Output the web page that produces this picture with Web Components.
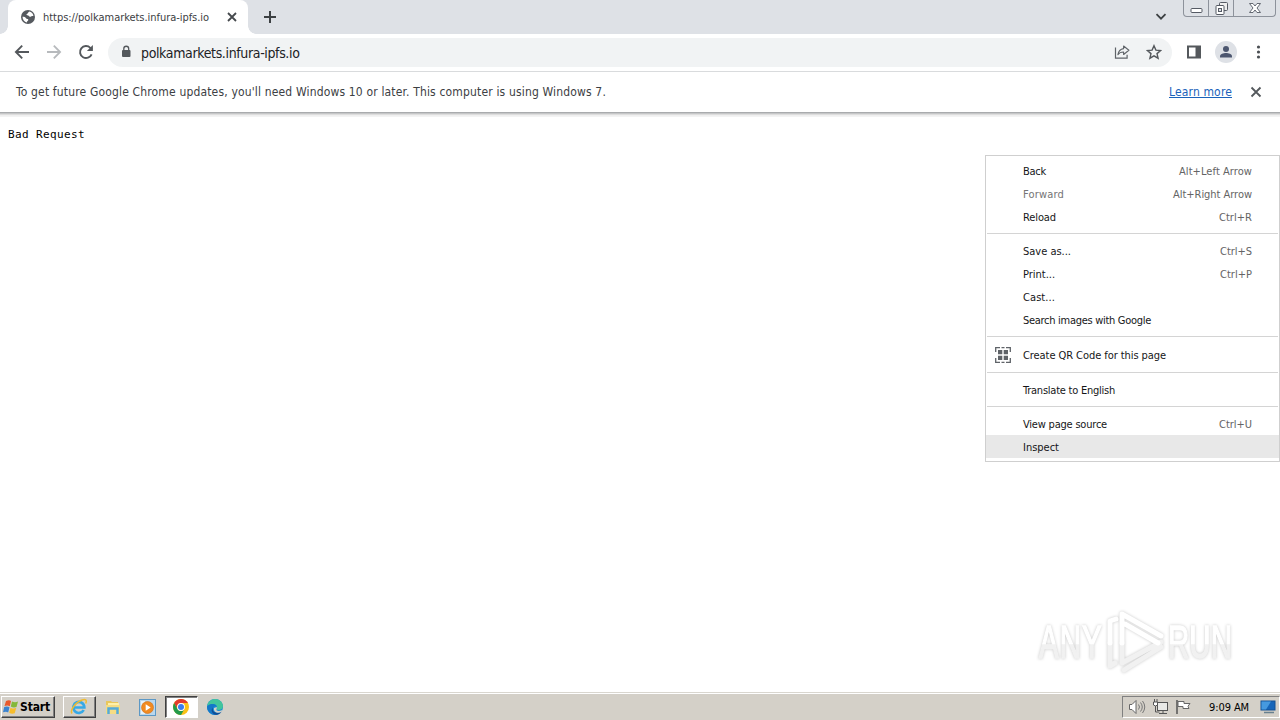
<!DOCTYPE html>
<html lang="en">
<head>
<meta charset="utf-8">
<title>polkamarkets.infura-ipfs.io</title>
<style>
    html, body {
        margin: 0;
        width: 1280px;
        height: 720px;
        overflow: hidden;
        background: #fff;
        font-family: "DejaVu Sans Condensed", "DejaVu Sans", Tahoma, sans-serif;
    }
</style>
</head>
<body>
<desktop-screen></desktop-screen>

<script>
/**
 * Base class: clones the static markup into an open shadow root
 */
class BaseElement extends HTMLElement {
    constructor() {
        super();
        this.attachShadow({ mode: 'open' });
    }

    connectedCallback() {
        this.shadowRoot.innerHTML = `<style>
            * { box-sizing: border-box; }
            svg { display: block; flex: none; }
            ${this.styles()}
        </style>${this.markup()}`;
    }

    styles() { return ''; }
    markup() { return '<slot></slot>'; }
}

/**
 * A single line of text, tracked so that it fills the given width
 */
class FitText extends HTMLElement {
    constructor() {
        super();
        this.attachShadow({ mode: 'open' });
    }

    connectedCallback() {
        this.shadowRoot.innerHTML = `
            <style>
                :host { display: flex; flex: none; white-space: nowrap; }
                span { display: block; text-decoration: inherit; }
            </style>
            <span></span>
        `;
        const span = this.shadowRoot.querySelector('span');
        span.textContent = this.getAttribute('text');
        const width = parseFloat(this.getAttribute('width'));
        if (!width) return;
        const natural = span.getBoundingClientRect().width;
        span.style.letterSpacing = (width - natural) / span.textContent.length + 'px';
        this.style.width = width + 'px';
    }
}

class TabStrip extends BaseElement {
    styles() {
        return `
            :host { display: flex; height: 34px; background: #dee1e6; padding-left: 8px; color: #3c4043; }
            .tab {
                position: relative; display: flex; align-items: center;
                width: 240px; height: 34px; padding: 0 9px 0 13px;
                background: #fff; border-radius: 8px 8px 0 0; font-size: 11px;
            }
            .tab::before, .tab::after {
                content: ""; position: absolute; bottom: 0; width: 8px; height: 8px;
            }
            .tab::before { left: -8px; background: radial-gradient(circle at 0 0, transparent 7.5px, #fff 8px); }
            .tab::after { right: -8px; background: radial-gradient(circle at 100% 0, transparent 7.5px, #fff 8px); }
            fit-text { margin: 0 auto 0 8px; }
            .plus { margin: 11px 0 0 16px; }
            .search { margin: 13px 16px 0 auto; }
            .controls {
                display: flex; height: 17px; width: 93px; margin-right: 4px;
                border: 1px solid #8d929b; border-top: 0; border-radius: 0 0 4px 4px;
            }
            .controls span { display: flex; justify-content: center; align-items: center; border-right: 1px solid #8d929b; }
            .controls span:nth-child(1) { width: 25px; }
            .controls span:nth-child(2) { width: 25px; }
            .controls span:nth-child(3) { flex: 1; border: 0; }
        `;
    }

    markup() {
        return `
            <div class="tab">
                <svg width="14" height="14" viewBox="0 0 14 14">
                    <circle cx="7" cy="7" r="7" fill="#565a5f"/>
                    <path d="M8.600 1.600C7 2 7.200 3.600 5.900 4.100c-.8.3-.4 1.200.4 1.200 1.800.1 1.500 1.400 2.700 1.500 1.200 0 1.400-1.100 3.400-.7-.1-2-1.500-3.900-3.800-4.500zM1.500 6.800c1.800 0 2.900.4 3.500 1.500.5.8 2.200.4 2.300 1.400.1 1.200-1.500 1-1.400 2.700-2.600-.5-4.300-2.900-4.400-5.600z" fill="#fff"/>
                </svg>
                <fit-text text="https://polkamarkets.infura-ipfs.io" width="166"></fit-text>
                <svg width="14" height="14" viewBox="0 0 14 14"><path d="M3 3l8 8M11 3l-8 8" stroke="#45494d" stroke-width="1.800"/></svg>
            </div>
            <svg class="plus" width="12" height="12" viewBox="0 0 12 12"><path d="M6 0v12M0 6h12" stroke="#3c4043" stroke-width="2"/></svg>
            <svg class="search" width="12" height="8" viewBox="0 0 12 8"><path d="M1.500 1.200L6 5.700l4.500-4.500" fill="none" stroke="#3c4043" stroke-width="1.800"/></svg>
            <div class="controls">
                <span><svg width="13" height="17" viewBox="0 0 13 17"><rect x="1" y="8.500" width="11" height="4" rx="1" fill="#fff" stroke="#555a64"/></svg></span>
                <span><svg width="13" height="17" viewBox="0 0 13 17"><rect x="4.500" y="2.500" width="8" height="8" rx="1" fill="#eee" stroke="#555a64"/><rect x="1" y="5.500" width="8" height="9" rx="1" fill="#fff" stroke="#555a64"/><rect x="3.500" y="8.500" width="3" height="3" fill="#dee1e6" stroke="#555a64"/></svg></span>
                <span><svg width="14" height="17" viewBox="0 0 14 17"><path d="M1.500 3.500h3.500L7 6l2-2.500h3.500L9 8l3.500 4.500H9L7 10l-2 2.500H1.500L5 8z" fill="#fff" stroke="#555a64" stroke-width=".9"/></svg></span>
            </div>
        `;
    }
}

class BrowserToolbar extends BaseElement {
    styles() {
        return `
            :host { display: flex; align-items: center; height: 38px; padding: 0 14px 1px; background: #fff; border-bottom: 1px solid #d9dbdd; }
            .omnibox {
                display: flex; align-items: center; width: 1064px; height: 29px;
                margin-left: 14px; padding: 0 10px 0 12px;
                border-radius: 15px; background: #f1f3f4; color: #202124; font-size: 14px;
            }
            fit-text { margin: 2px auto 0 9px; line-height: 18px; }
            .nav + .nav { margin-left: 16px; }
            .star { margin-left: 16px; }
            .panel { margin-left: 14px; }
            .avatar { margin-left: 13px; }
            .more { margin-left: 19px; }
        `;
    }

    markup() {
        return `
            <svg class="nav" width="16" height="16" viewBox="0 0 16 16"><path d="M15 8H2M8.200 1.700L1.900 8l6.300 6.300" fill="none" stroke="#54585c" stroke-width="1.900"/></svg>
            <svg class="nav" width="16" height="16" viewBox="0 0 16 16"><path d="M1 8h13M7.800 1.700L14.100 8l-6.300 6.300" fill="none" stroke="#b7babd" stroke-width="1.800"/></svg>
            <svg class="nav" width="16" height="16" viewBox="0 0 16 16"><path d="M13.600 10.300A6 6 0 1 1 12.300 3.800L14 5.500" fill="none" stroke="#54585c" stroke-width="1.900"/><path d="M14.900 1v6H8.900z" fill="#54585c"/></svg>
            <div class="omnibox">
                <svg width="12" height="14" viewBox="0 0 12 14"><rect x="2" y="5" width="8.500" height="7" rx="1" fill="#54585c"/><path d="M3.800 6V3.700a2.450 2.450 0 0 1 4.900 0V6" fill="none" stroke="#54585c" stroke-width="1.300"/></svg>
                <fit-text text="polkamarkets.infura-ipfs.io" width="158.500"></fit-text>
                <svg width="16" height="16" viewBox="0 0 16 16"><path d="M1.500 3.500v10.600h11.600v-3.300" fill="none" stroke="#5f6368" stroke-width="1.200"/><path d="M9.600 2l5.300 4.300-5.300 4.200V8C7 8 5.100 8.800 3.900 10.700 4.400 7.500 6.300 5 9.600 4.600z" fill="none" stroke="#5f6368" stroke-width="1.100" stroke-linejoin="round"/></svg>
                <svg class="star" width="16" height="16" viewBox="0 0 16 16"><path d="M8 1.700l1.900 4.400 4.700.4L11 9.600l1.100 4.600L8 11.800l-4.100 2.400L5 9.600 1.400 6.500l4.700-.4z" fill="none" stroke="#54585c" stroke-width="1.400"/></svg>
            </div>
            <svg class="panel" width="16" height="16" viewBox="0 0 16 16"><rect x="2" y="2.500" width="12" height="11" fill="none" stroke="#54585c" stroke-width="2"/><path d="M9.500 2h5v12h-5z" fill="#54585c"/></svg>
            <svg class="avatar" width="22" height="22" viewBox="0 0 22 22"><circle cx="11" cy="11" r="11" fill="#dee1e6"/><circle cx="11" cy="8" r="3" fill="#4c566f"/><path d="M5 16.500v-1.300c0-2.100 3.500-3.200 6-3.200s6 1.100 6 3.200v1.300z" fill="#4c566f"/></svg>
            <svg class="more" width="5" height="16" viewBox="0 0 5 16"><g fill="#4b4f53"><circle cx="2.500" cy="3" r="1.600"/><circle cx="2.500" cy="8" r="1.600"/><circle cx="2.500" cy="13" r="1.600"/></g></svg>
        `;
    }
}

class InfoBar extends BaseElement {
    styles() {
        return `
            :host {
                display: flex; align-items: center; height: 40px; padding: 0 18px 0 16px;
                background: #fff; color: #3c4043; font-size: 12px; line-height: 16px;
                box-shadow: 0 1px 0 #a9abad, 0 2px 0 #c5c6c7, 0 3px 1px #ddd, 0 5px 0 #f3f3f3;
            }
            .link { margin-left: auto; margin-right: 18px; color: #1a62ba; text-decoration: underline; }
        `;
    }

    markup() {
        return `
            <fit-text text="To get future Google Chrome updates, you'll need Windows 10 or later. This computer is using Windows 7." width="590"></fit-text>
            <fit-text class="link" text="Learn more" width="63"></fit-text>
            <svg width="12" height="12" viewBox="0 0 12 12"><path d="M1.500 1.500l9 9M10.500 1.500l-9 9" stroke="#54585c" stroke-width="1.800"/></svg>
        `;
    }
}

class MenuItem extends BaseElement {
    styles() {
        return `
            :host { display: flex; align-items: center; height: 23px; padding: 0 27px 0 9px; color: #151618; }
            :host([disabled]) { color: #747474; }
            :host([active]) { background: #e8e8e8; }
            :host([tall]) { height: 25px; }
            fit-text { margin-top: 2px; }
            .icon { width: 16px; margin-right: 12px; }
            .shortcut { margin-left: auto; color: #646464; }
        `;
    }

    markup() {
        const shortcut = this.getAttribute('shortcut');
        return `
            <div class="icon"><slot></slot></div>
            <fit-text text="${this.getAttribute('label')}" width="${this.getAttribute('w')}"></fit-text>
            ${shortcut ? `<fit-text class="shortcut" text="${shortcut}" width="${this.getAttribute('sw')}"></fit-text>` : ''}
        `;
    }
}

class MenuSeparator extends BaseElement {
    styles() {
        return `
            :host { display: block; height: 11px; padding: 5px 1px; }
            div { height: 1px; background: #d4d4d4; }
        `;
    }

    markup() { return '<div></div>'; }
}

class ContextMenu extends BaseElement {
    styles() {
        return `
            :host {
                display: block; width: 295px; height: 307px; padding: 3px 0; box-sizing: border-box;
                background: #fff; border: 1px solid #cfcfcf; font-size: 11px; line-height: 15px;
            }
        `;
    }
}

/**
 * Semi-transparent ANY RUN mark in the lower right corner
 */
class RunWatermark extends BaseElement {
    styles() {
        return `
            :host { display: block; width: 210px; height: 74px; }
            svg { filter: drop-shadow(0 0 1.5px rgba(0, 0, 0, .22)); }
            text { font: 46px "Liberation Sans", sans-serif; fill: url(#fade); stroke: url(#fade); stroke-width: 1.5px; }
        `;
    }

    markup() {
        return `
            <svg width="210" height="74" viewBox="0 0 210 74">
                <defs><linearGradient id="fade" x1="0" y1="-33" x2="0" y2="0" gradientUnits="userSpaceOnUse">
                    <stop offset=".56" stop-color="#fff"/><stop offset=".6" stop-color="#f1f1f1"/>
                </linearGradient></defs>
                <g transform="translate(9 55) scale(.64 1)"><text textLength="98" y="0">ANY</text></g>
                <g transform="translate(138 55) scale(.64 1)"><text textLength="100" y="0">RUN</text></g>
                <g fill="none" stroke-width="5" stroke-linejoin="round" stroke-linecap="round">
                    <path d="M94 67l37-23M131 39l-39 21V40" stroke="#f1f1f1"/>
                    <path d="M80 40v23l5-3" stroke="#f1f1f1"/>
                    <path d="M80 40V18l6-2" stroke="#fff"/>
                    <path d="M92 40V11l39 22M95 21l33 19" stroke="#fff"/>
                </g>
            </svg>
        `;
    }
}

class TaskBar extends BaseElement {
    styles() {
        return `
            :host {
                display: flex; align-items: center; height: 28px; padding: 3px 0 2px 1px; box-sizing: border-box;
                background: #d4d0c8; border-top: 1px solid #d9d6cf; box-shadow: inset 0 1px #fff; color: #000;
            }
            .start, .app {
                display: flex; align-items: center; justify-content: center; height: 22px;
            }
            .start, .raised {
                border: 1px solid; border-color: #fff #404040 #404040 #fff;
                box-shadow: inset -1px -1px #808080;
            }
            .start { width: 54px; padding-right: 3px; font-size: 12px; font-weight: bold; }
            .app { width: 33px; margin-right: 1px; padding-right: 1px; }
            .raised { margin-left: 8px; }
            .pressed { border: 1px solid; border-color: #404040 #fff #fff #404040; background: #fff; box-shadow: inset 1px 1px #808080; }
            .tray {
                display: flex; align-items: center; width: 158px; height: 22px; margin-left: auto; padding: 0 3px 0 5px;
                border: 1px solid; border-color: #808080 #fff #fff #808080; font-size: 11px;
            }
            .tray svg + svg { margin-left: 6px; }
            .tray fit-text { margin-left: auto; }
            .tray fit-text + svg { margin-left: 11px; }
        `;
    }

    markup() {
        return `
            <div class="start">
                <svg width="17" height="16" viewBox="0 0 17 16">
                    <path d="M3 2c2-1 4-1 5 0L6.800 7.200C5.300 6.200 3.500 6.200 1.500 7z" fill="#e8592b"/>
                    <path d="M9 2.500c2 1 4 1 6 0L13.500 8c-2 .8-4 .6-5.700-.4z" fill="#84b83a"/>
                    <path d="M1.200 8c2-.8 4-.7 5.300.3L5.200 13.500C4 12.500 2 12.400 0 13.200z" fill="#3a83cf"/>
                    <path d="M7.500 8.700c1.700 1 3.700 1.200 5.700.4l-1.500 5.200c-2 .8-4 .5-5.500-.5z" fill="#f7bd2c"/>
                </svg>
                <fit-text text="Start" width="30"></fit-text>
            </div>
            <div class="app raised">
                <svg width="18" height="18" viewBox="0 0 18 18">
                    <path d="M13.700 12A5.500 5.500 0 1 1 14.300 9.500H4" fill="none" stroke="#37a9e6" stroke-width="2.700"/>
                    <path d="M2 15.500C-.5 12 6 4 12 2c4-1.400 5 .5 3.700 3.500" fill="none" stroke="#efbb31" stroke-width="1.500"/>
                </svg>
            </div>
            <div class="app">
                <svg width="18" height="18" viewBox="0 0 18 18">
                    <path d="M2 3h5l1 1h6v11H2z" fill="#e9c75c"/><path d="M4 5h11v9H4z" fill="#fff0a8"/>
                    <path d="M2 7h14v9H2z" fill="#f5dc83"/><path d="M4.500 16v-5.500h9V16" fill="none" stroke="#54aad9" stroke-width="2.500"/>
                </svg>
            </div>
            <div class="app">
                <svg width="17" height="17" viewBox="0 0 17 17">
                    <rect x=".5" y=".5" width="16" height="16" fill="#b9d7ed" stroke="#5c98c5"/><rect x="2" y="2" width="4" height="13" fill="#e5f2fa"/>
                    <circle cx="8.500" cy="8.500" r="6" fill="#f18a20" stroke="#d46e14" stroke-width=".6"/><path d="M6.700 5.200v6.600l5-3.300z" fill="#fff"/>
                </svg>
            </div>
            <div class="app pressed">
                <svg width="16" height="16" viewBox="0 0 16 16">
                    <circle cx="8" cy="8" r="8" fill="#fbc116"/>
                    <path d="M8 4h7A8 8 0 0 0 1.100 4l3.400 6A4 4 0 0 1 8 4z" fill="#e33b2e"/>
                    <path d="M1.100 4A8 8 0 0 0 8 16l3.500-6A4 4 0 0 1 4.500 10z" fill="#229a4b"/>
                    <circle cx="8" cy="8" r="3.900" fill="#fff"/><circle cx="8" cy="8" r="3" fill="#3b7ded"/>
                </svg>
            </div>
            <div class="app">
                <svg width="16" height="16" viewBox="0 0 16 16">
                    <circle cx="8" cy="8" r="8" fill="#168bd4"/>
                    <path d="M.2 7C.8 3 4 0 8 0c4.500 0 8 3.500 8 7 0 2.500-2 4-4.500 4-2 0-2.500-.8-1.500-2 .8-3-4-6-9.800-2z" fill="#42c59c"/>
                    <path d="M.2 7C4 3.800 9 4.500 9.700 7.500 6 6.500 4 10 6.500 13.500 8 15.200 10 15.500 12 15 6 18-1 13 .2 7z" fill="#1478c8"/>
                    <path d="M6 8.500c-1.500 4 3 7 8.500 4.200C12 17 5.500 16.500 4.700 12c-.2-1.500.3-2.800 1.300-3.500z" fill="#124d96"/>
                    <path d="M9.700 8c.7 2-2 3.500 2 4 1.600.1 3.500-.8 4.100-1.700L14.500 13c-4 2.200-8.500-.5-7.500-4z" fill="#d4d0c8"/>
                </svg>
            </div>
            <div class="tray">
                <svg width="18" height="16" viewBox="0 0 18 16"><path d="M1.500 5.500H4l4-4v13l-4-4H1.500z" fill="#fff" stroke="#666"/><path d="M10.500 5.500q2 2.500 0 5M12.500 3.500q3.500 4.500 0 9M14.500 2q4.500 6 0 12" fill="none" stroke="#777"/></svg>
                <svg width="17" height="16" viewBox="0 0 17 16"><rect x="5.500" y="3.500" width="10" height="8" fill="#e9e9e6" stroke="#555"/><path d="M7 14.500h8M11 12v2M3.500 7v6h4" fill="none" stroke="#555"/><path d="M1.500 3v3q2 2 4 0V3zM2.500 0v3M5 0v3" fill="#fff" stroke="#555"/></svg>
                <svg width="17" height="16" viewBox="0 0 17 16"><path d="M2 1v14" stroke="#555" stroke-width="1.500"/><path d="M3 2.500h6v2h6l-2 2.700 1 2.300H8v-2H3z" fill="#fff" stroke="#666"/></svg>
                <fit-text text="9:09 AM" width="40"></fit-text>
                <svg width="16" height="14" viewBox="0 0 16 14"><rect x="1" y="1" width="14" height="9" fill="#1665b9" stroke="#155091"/><path d="M1.500 1.500H11L6 9.500H1.500z" fill="#4699df"/><path d="M4 12.500h10" stroke="#68808f" stroke-width="1.500"/></svg>
            </div>
        `;
    }
}

class DesktopScreen extends BaseElement {
    styles() {
        return `
            :host { display: flex; flex-direction: column; position: relative; width: 1280px; height: 720px; }
            main { flex: 1; padding: 16px 8px; font: 11px/14px "DejaVu Sans Mono", monospace; color: #000; }
            context-menu { position: absolute; left: 985px; top: 155px; }
            run-watermark { position: absolute; left: 1030px; top: 603px; }
        `;
    }

    markup() {
        return `
            <tab-strip></tab-strip>
            <browser-toolbar></browser-toolbar>
            <info-bar></info-bar>
            <main><fit-text text="Bad Request" width="77"></fit-text></main>
            <task-bar></task-bar>
            <context-menu>
                <menu-item label="Back" w="23" shortcut="Alt+Left Arrow" sw="73"></menu-item>
                <menu-item label="Forward" w="41" shortcut="Alt+Right Arrow" sw="79" disabled></menu-item>
                <menu-item label="Reload" w="33" shortcut="Ctrl+R" sw="33"></menu-item>
                <menu-separator></menu-separator>
                <menu-item label="Save as..." w="48" shortcut="Ctrl+S" sw="32"></menu-item>
                <menu-item label="Print..." w="32" shortcut="Ctrl+P" sw="32"></menu-item>
                <menu-item label="Cast..." w="32"></menu-item>
                <menu-item label="Search images with Google" w="128"></menu-item>
                <menu-separator></menu-separator>
                <menu-item label="Create QR Code for this page" w="143" tall>
                    <svg style="display:block" width="16" height="16" viewBox="0 0 16 16">
                        <path d="M.700 5V.700H5M11 .700h4.300V5M15.300 11v4.300H11M5 15.300H.700V11M6.500 .700h3M6.500 15.300h3" fill="none" stroke="#5f6368" stroke-width="1.300"/>
                        <path d="M3 3h4.300v4.300H3zM8.700 3H13v4.300H8.700zM3 8.700h4.300V13H3zM8.700 8.700H13V13H8.700z" fill="#5f6368"/>
                    </svg>
                </menu-item>
                <menu-separator></menu-separator>
                <menu-item label="Translate to English" w="92"></menu-item>
                <menu-separator></menu-separator>
                <menu-item label="View page source" w="84" shortcut="Ctrl+U" sw="33"></menu-item>
                <menu-item label="Inspect" w="36" active></menu-item>
            </context-menu>
            <run-watermark></run-watermark>
        `;
    }
}

customElements.define('fit-text', FitText);
customElements.define('tab-strip', TabStrip);
customElements.define('browser-toolbar', BrowserToolbar);
customElements.define('info-bar', InfoBar);
customElements.define('menu-item', MenuItem);
customElements.define('menu-separator', MenuSeparator);
customElements.define('context-menu', ContextMenu);
customElements.define('run-watermark', RunWatermark);
customElements.define('task-bar', TaskBar);
customElements.define('desktop-screen', DesktopScreen);
</script>
</body>
</html>
